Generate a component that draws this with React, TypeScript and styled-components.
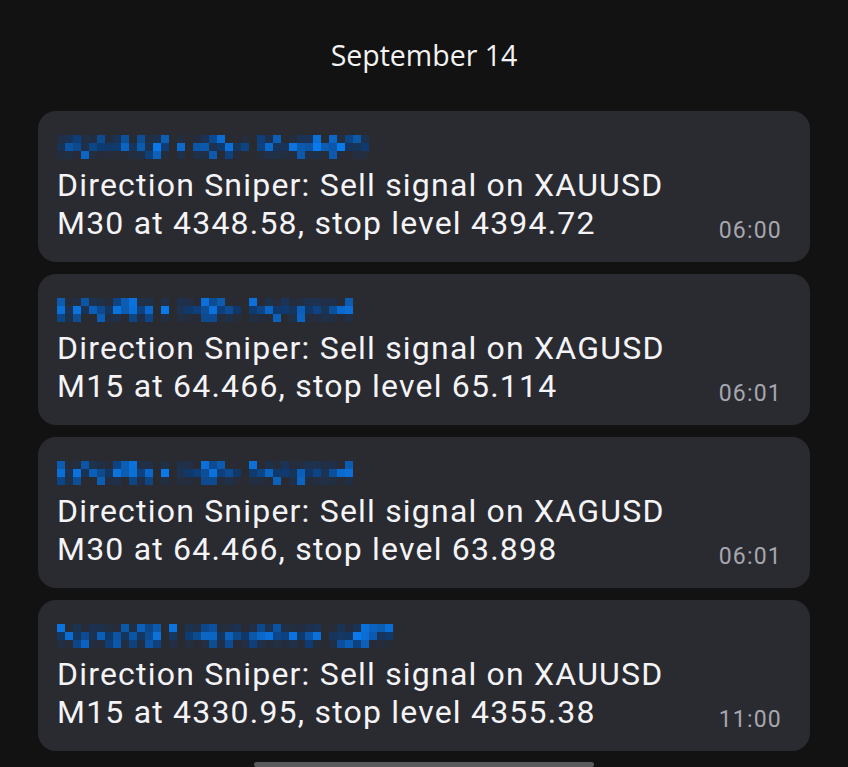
import { createGlobalStyle } from 'styled-components'
import styled from 'styled-components'

const GlobalStyle = createGlobalStyle`
  html, body {
    margin: 0;
    padding: 0;
    background: #121212;
  }
  body {
    font-family: Roboto, "Noto Sans", sans-serif;
    overflow: hidden;
  }
`

type Message = {
  seed: number
  words: number[]
  lines: string[]
  time: string
}

const messages: Message[] = [
  {
    seed: 7,
    words: [14, 1, 7, 14],
    lines: ['Direction Sniper: Sell signal on XAUUSD', 'M30 at 4348.58, stop level 4394.72'],
    time: '06:00',
  },
  {
    seed: 19,
    words: [12, 1, 8, 13],
    lines: ['Direction Sniper: Sell signal on XAGUSD', 'M15 at 64.466, stop level 65.114'],
    time: '06:01',
  },
  {
    seed: 19,
    words: [12, 1, 8, 13],
    lines: ['Direction Sniper: Sell signal on XAGUSD', 'M30 at 64.466, stop level 63.898'],
    time: '06:01',
  },
  {
    seed: 41,
    words: [13, 1, 17, 8],
    lines: ['Direction Sniper: Sell signal on XAUUSD', 'M15 at 4330.95, stop level 4355.38'],
    time: '11:00',
  },
]

const Page = styled.main`
  display: flex;
  flex-direction: column;
  padding: 0 38px;
  height: 767px;
  overflow: hidden;
`

const DateHeader = styled.h2`
  margin: 36px 0 37px;
  color: #f2f2f2;
  font-family: "Open Sans", "Noto Sans", sans-serif;
  font-size: 28.5px;
  font-weight: 400;
  line-height: 38px;
  text-align: center;
`

const CardList = styled.div`
  display: flex;
  flex-direction: column;
  gap: 12px;
`

const Card = styled.article`
  display: flex;
  align-items: flex-end;
  height: 151px;
  box-sizing: border-box;
  padding: 23px 28px 20px 19px;
  border-radius: 18px;
  background: #2a2a31;
`

const Body = styled.div`
  flex: 1;
  min-width: 0;
`

const Sender = styled.svg`
  display: block;
  margin-bottom: 7px;
`

const Line = styled.div`
  color: #f4f4f6;
  font-size: 32px;
  letter-spacing: 1.2px;
  line-height: 38px;
  white-space: nowrap;
`

const Time = styled.span`
  color: #a6a6ae;
  font-size: 23px;
  letter-spacing: 1.2px;
  line-height: 22px;
`

const HomeBar = styled.div`
  align-self: center;
  width: 340px;
  height: 8px;
  margin-top: 11px;
  border-radius: 4px;
  background: #5a5a5c;
`

// pixelated sender name (redacted in the screenshot)
function rand(seed: number) {
  let s = seed
  return () => {
    s = (s * 9301 + 49297) % 233280
    return s / 233280
  }
}

const BG = [42, 42, 49]
const BLUE = [10, 122, 236]
const NAVY = [14, 58, 112]

function mix(a: number[], b: number[], t: number) {
  return `rgb(${a.map((v, i) => Math.round(v + (b[i] - v) * t)).join(',')})`
}

function SenderMosaic({ seed, words }: { seed: number; words: number[] }) {
  const r = rand(seed)
  const cells: { x: number; y: number; fill: string }[] = []
  let col = 0
  words.forEach((len, wi) => {
    for (let i = 0; i < len; i++) {
      for (let row = 0; row < 3; row++) {
        const v = r()
        let fill: string
        if (row === 1) {
          fill = v > 0.4 ? mix(NAVY, BLUE, r()) : mix(BG, NAVY, 0.4 + r() * 0.6)
        } else if (row === 0) {
          fill = v > 0.6 ? mix(NAVY, BLUE, r() * 0.9) : mix(BG, NAVY, r() * 0.6)
        } else {
          fill = v > 0.7 ? mix(NAVY, BLUE, r() * 0.7) : mix(BG, NAVY, r() * 0.4)
        }
        cells.push({ x: (col + i) * 8, y: row * 8, fill })
      }
    }
    col += len + (wi < words.length - 1 ? 1 : 0)
  })
  return (
    <Sender width={col * 8} height={24} viewBox={`0 0 ${col * 8} 24`}>
      {cells.map((c, i) => (
        <rect key={i} x={c.x} y={c.y} width={8} height={8} fill={c.fill} />
      ))}
    </Sender>
  )
}

export default function App() {
  return (
    <>
      <GlobalStyle />
      <Page>
        <DateHeader>September 14</DateHeader>
        <CardList>
          {messages.map((m, i) => (
            <Card key={i}>
              <Body>
                <SenderMosaic seed={m.seed} words={m.words} />
                {m.lines.map((l) => (
                  <Line key={l}>{l}</Line>
                ))}
              </Body>
              <Time>{m.time}</Time>
            </Card>
          ))}
        </CardList>
        <HomeBar />
      </Page>
    </>
  )
}
